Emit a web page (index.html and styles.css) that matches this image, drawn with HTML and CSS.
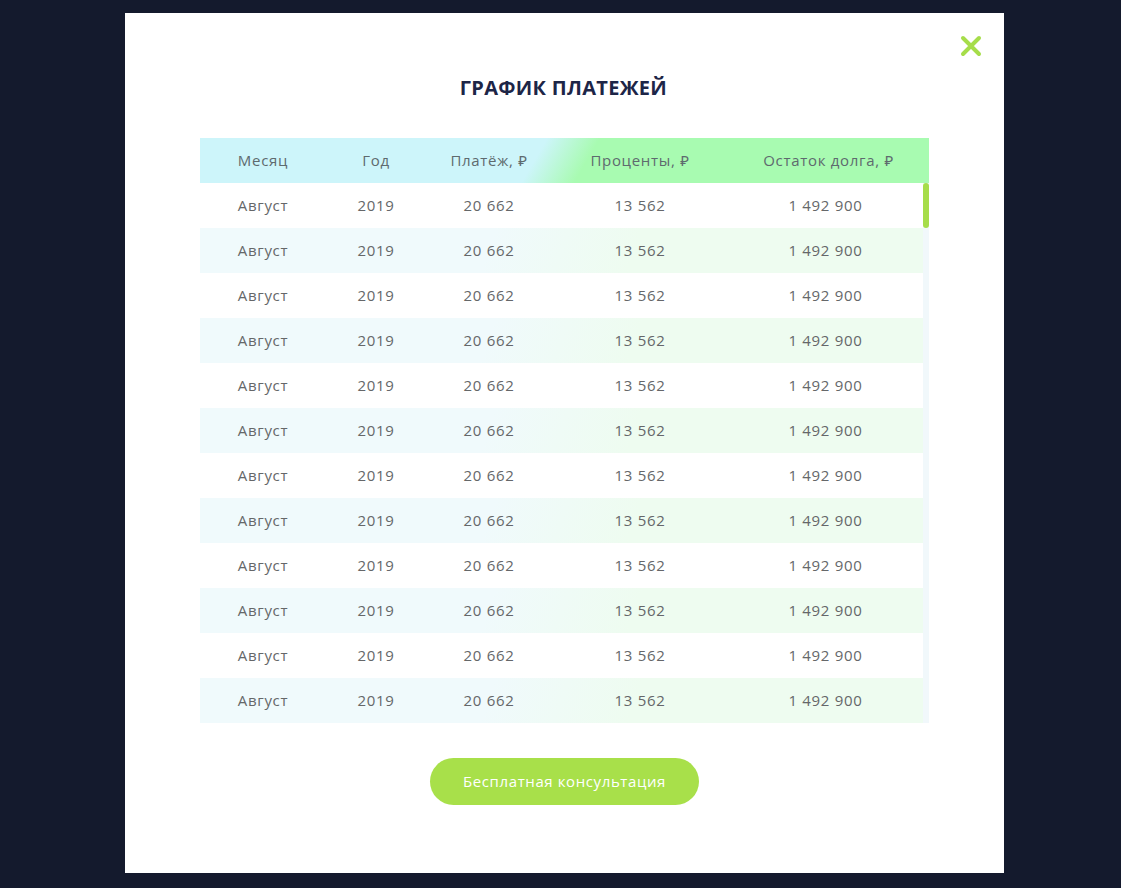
FILE: index.html
```html
<!DOCTYPE html>
<html lang="ru">
<head>
<meta charset="utf-8">
<title>График платежей</title>
<link rel="stylesheet" href="styles.css">
</head>
<body>
<div class="overlay">
  <div class="modal">
    <button class="close" aria-label="Закрыть">
      <svg width="22" height="22" viewBox="0 0 22 22"><path d="M3 3 L19 19 M19 3 L3 19" stroke="#a6dd4a" stroke-width="4" stroke-linecap="round"/></svg>
    </button>
    <h2 class="title">ГРАФИК ПЛАТЕЖЕЙ</h2>
    <div class="table">
      <div class="thead">
        <div class="row">
          <span>Месяц</span><span>Год</span><span>Платёж, ₽</span><span>Проценты, ₽</span><span>Остаток долга, ₽</span>
        </div>
      </div>
      <div class="tbody-wrap">
        <div class="tbody">
          <div class="row"><span>Август</span><span>2019</span><span>20 662</span><span>13 562</span><span>1 492 900</span></div>
          <div class="row alt"><span>Август</span><span>2019</span><span>20 662</span><span>13 562</span><span>1 492 900</span></div>
          <div class="row"><span>Август</span><span>2019</span><span>20 662</span><span>13 562</span><span>1 492 900</span></div>
          <div class="row alt"><span>Август</span><span>2019</span><span>20 662</span><span>13 562</span><span>1 492 900</span></div>
          <div class="row"><span>Август</span><span>2019</span><span>20 662</span><span>13 562</span><span>1 492 900</span></div>
          <div class="row alt"><span>Август</span><span>2019</span><span>20 662</span><span>13 562</span><span>1 492 900</span></div>
          <div class="row"><span>Август</span><span>2019</span><span>20 662</span><span>13 562</span><span>1 492 900</span></div>
          <div class="row alt"><span>Август</span><span>2019</span><span>20 662</span><span>13 562</span><span>1 492 900</span></div>
          <div class="row"><span>Август</span><span>2019</span><span>20 662</span><span>13 562</span><span>1 492 900</span></div>
          <div class="row alt"><span>Август</span><span>2019</span><span>20 662</span><span>13 562</span><span>1 492 900</span></div>
          <div class="row"><span>Август</span><span>2019</span><span>20 662</span><span>13 562</span><span>1 492 900</span></div>
          <div class="row alt"><span>Август</span><span>2019</span><span>20 662</span><span>13 562</span><span>1 492 900</span></div>
        </div>
        <div class="scrollbar"><div class="thumb"></div></div>
      </div>
    </div>
    <button class="cta">Бесплатная консультация</button>
  </div>
</div>
</body>
</html>
```
FILE: styles.css
```css
* { box-sizing: border-box; }
html, body { margin: 0; padding: 0; }
body {
  background: #141a2d;
  font-family: "Open Sans", "Noto Sans", sans-serif;
  width: 1121px;
  height: 888px;
  overflow: hidden;
}
.overlay {
  padding: 13px 0 0 125px;
}
.modal {
  position: relative;
  width: 879px;
  height: 860px;
  background: #ffffff;
  display: flex;
  flex-direction: column;
  align-items: center;
  padding-top: 62px;
}
.close {
  position: absolute;
  top: 22px;
  right: 22px;
  width: 22px;
  height: 22px;
  padding: 0;
  border: 0;
  background: none;
  display: flex;
}
.title {
  margin: 0 0 0 -2px;
  font-size: 20px;
  line-height: 26px;
  font-weight: 700;
  color: #1d2547;
  letter-spacing: 0.3px;
}
.table {
  margin-top: 37px;
  width: 729px;
}
.row {
  display: grid;
  grid-template-columns: 126px 100px 126px 176px 195px;
  height: 45px;
  align-items: center;
  text-align: center;
  font-size: 15px;
  line-height: 20px;
  padding-bottom: 2px;
  letter-spacing: 0.7px;
  color: #656769;
}
.thead .row {
  width: 729px;
  grid-template-columns: 126px 100px 126px 176px 201px;
  background: linear-gradient(120deg, #cdf5fa 0%, #cdf5fa 46%, #a8fbb1 53%, #a8fbb1 100%);
  color: #5e6a6e;
}
.tbody-wrap {
  display: flex;
}
.tbody {
  width: 723px;
}
.row.alt {
  background: linear-gradient(110deg, #f0fafc 0%, #f0fafc 40%, #eefcf0 60%, #eefcf0 100%);
}
.scrollbar {
  width: 6px;
  background: #f1f8fb;
}
.thumb {
  height: 45px;
  background: #a6dd4a;
  border-radius: 3px;
}
.cta {
  margin-top: 35px;
  width: 269px;
  height: 47px;
  border: 0;
  border-radius: 24px;
  background: #a8e04a;
  color: #ffffff;
  font-family: "Open Sans", "Noto Sans", sans-serif;
  font-size: 15px;
  letter-spacing: 0.6px;
  padding-bottom: 2px;
}
```
